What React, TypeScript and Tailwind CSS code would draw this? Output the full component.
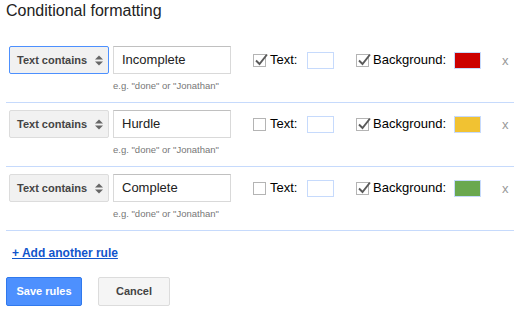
import React from 'react'

type Rule = { value: string; text: boolean; bg: boolean; color: string; focused?: boolean }

const rules: Rule[] = [
  { value: 'Incomplete', text: true, bg: true, color: '#cc0000', focused: true },
  { value: 'Hurdle', text: false, bg: true, color: '#f1c232' },
  { value: 'Complete', text: false, bg: true, color: '#6aa84f' },
]

function Check({ on }: { on: boolean }) {
  return (
    <span className="relative block h-[13px] w-[13px] shrink-0 border border-[#b4b4b4] bg-white">
      {on && (
        <svg className="absolute -top-[2px] left-[1px]" width="13" height="13" viewBox="0 0 13 13">
          <path d="M1 7.5 L4.5 11 L12 1.5" fill="none" stroke="#5a5a5a" strokeWidth="1.9" />
        </svg>
      )}
    </span>
  )
}

function Arrows() {
  return (
    <svg width="8" height="11" viewBox="0 0 8 11" className="shrink-0">
      <path d="M0 4.5 L4 0.5 L8 4.5 Z" fill="#666" />
      <path d="M0 6.5 L4 10.5 L8 6.5 Z" fill="#666" />
    </svg>
  )
}

export default function App() {
  return (
    <div className="pl-[6px] text-black" style={{ fontFamily: '"Liberation Sans", Arial, sans-serif' }}>
      <h1 className="pt-[1px] text-[16px] leading-[20px] text-[#222]">Conditional formatting</h1>
      <div className="mt-[18px] w-[508px]">
        {rules.map((r) => (
          <div key={r.value} className="border-b border-[#c6dafc] pt-[7px]">
            <div className="flex h-[28px] items-center">
              <div
                className={`ml-[3px] flex h-[28px] w-[100px] items-center justify-between rounded-[2px] border bg-[#f1f1f1] pl-[7px] pr-[5px] text-[11px] font-bold text-[#444] ${
                  r.focused ? 'border-[#4d90fe]' : 'border-[#dcdcdc]'
                }`}
              >
                <span>Text contains</span>
                <Arrows />
              </div>
              <div className="ml-[4px] flex h-[28px] w-[118px] items-center border border-[#d9d9d9] border-t-[#c0c0c0] pl-[8px] text-[13px] text-[#222]">
                {r.value}
              </div>
              <span className="ml-[22px]">
                <Check on={r.text} />
              </span>
              <span className="ml-[4px] w-[37px] text-[13px]">Text:</span>
              <span className="h-[17px] w-[27px] border border-[#c6dafc] bg-white" />
              <span className="ml-[22px]">
                <Check on={r.bg} />
              </span>
              <span className="ml-[4px] w-[81px] text-[13px]">Background:</span>
              <span className="h-[17px] w-[27px] border border-[#c6dafc]" style={{ backgroundColor: r.color }} />
              <span className="ml-[21px] text-[13px] leading-none text-[#999]">x</span>
            </div>
            <div className="h-[28px] pl-[107px] pt-[6px] text-[9.5px] leading-[12px] text-[#777]">
              e.g. "done" or "Jonathan"
            </div>
          </div>
        ))}
      </div>
      <a className="ml-[6px] mt-[15px] inline-block text-[12px] font-bold leading-[14px] text-[#15c] underline">
        + Add another rule
      </a>
      <div className="mt-[13px] flex gap-[16px]">
        <button className="h-[29px] w-[76px] rounded-[2px] border border-[#3079ed] bg-[#4d90fe] text-[11px] font-bold text-white">
          Save rules
        </button>
        <button className="h-[29px] w-[72px] rounded-[2px] border border-[#dcdcdc] bg-[#f5f5f5] text-[11px] font-bold text-[#444]">
          Cancel
        </button>
      </div>
    </div>
  )
}
